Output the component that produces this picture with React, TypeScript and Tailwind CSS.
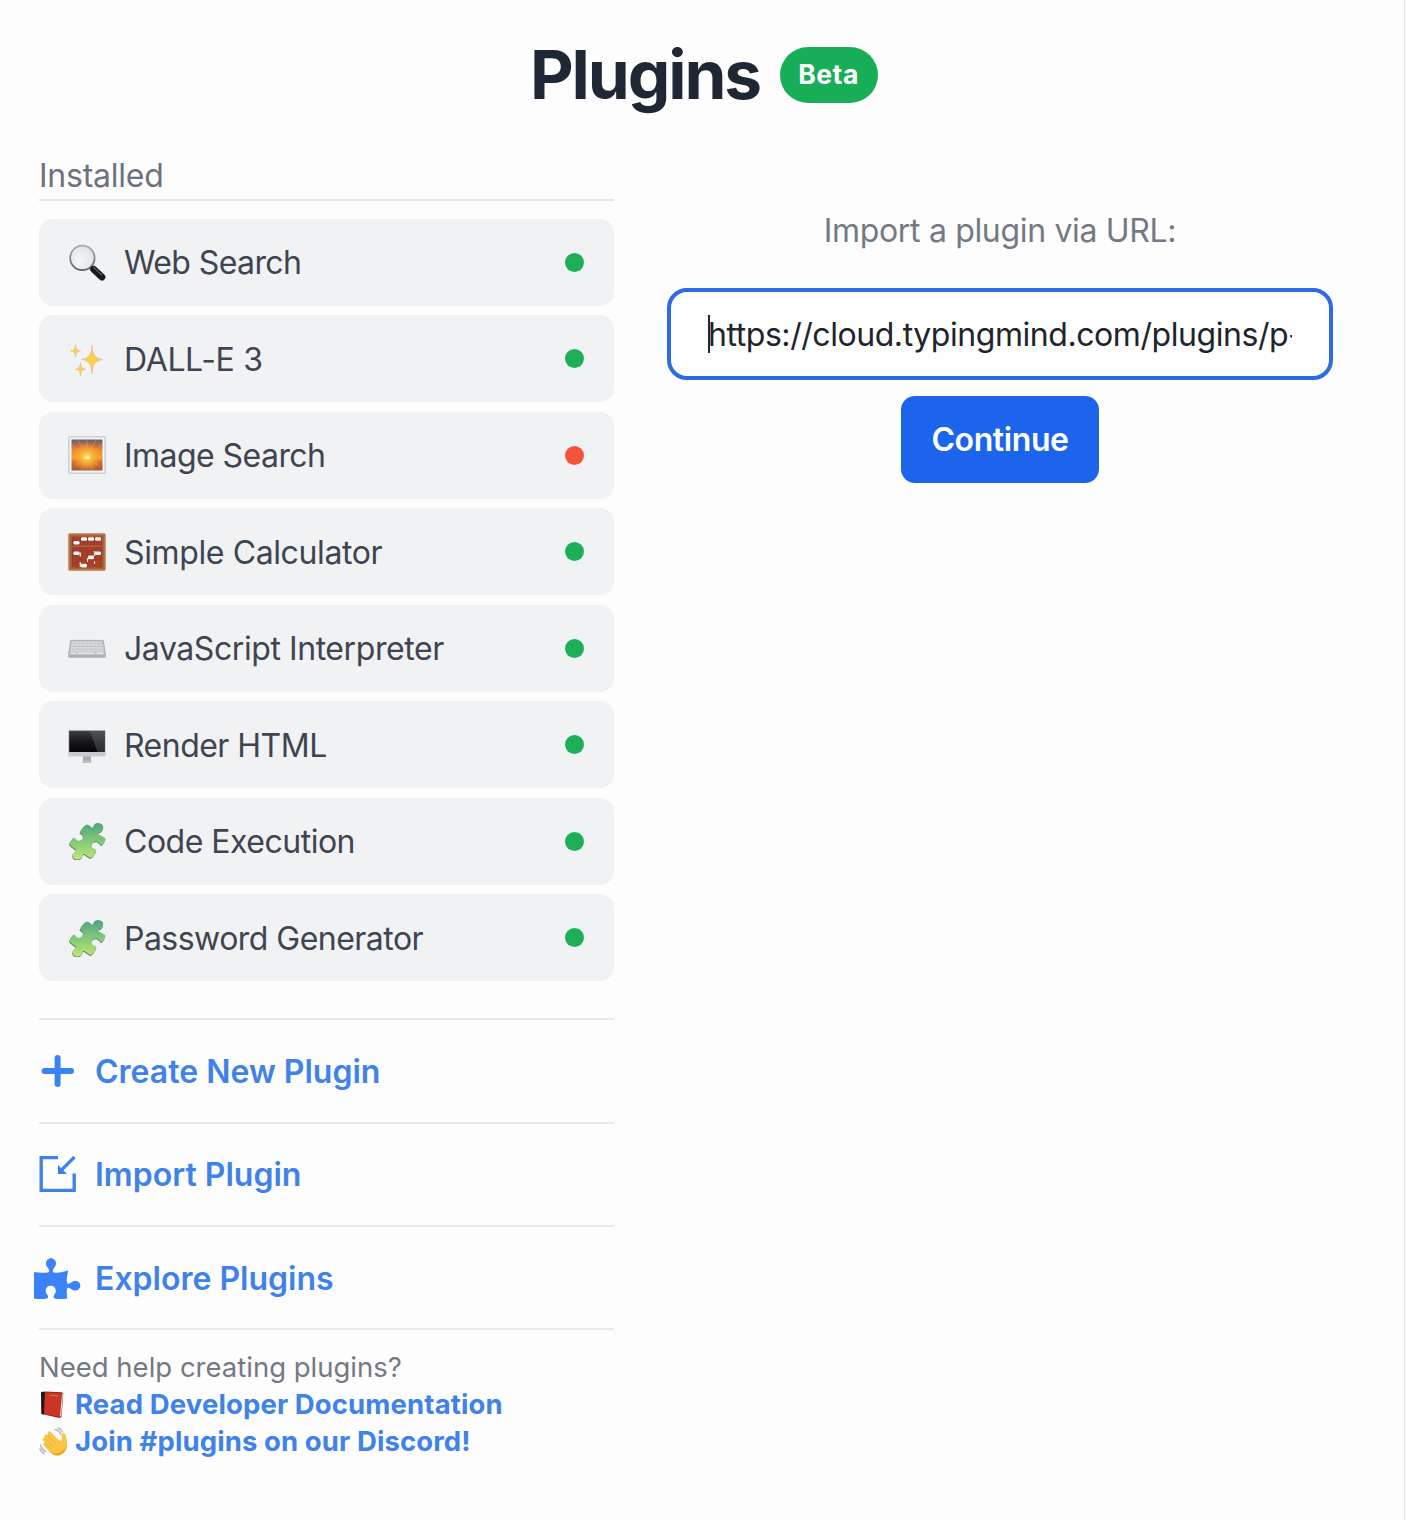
import type { ReactNode } from "react";

function Magnifier() {
  return (
    <svg viewBox="0 0 38 38" className="size-[38px] shrink-0">
      <defs>
        <radialGradient id="lens" cx="40%" cy="60%" r="65%">
          <stop offset="0" stopColor="#f6f7f8" />
          <stop offset="1" stopColor="#dfe1e4" />
        </radialGradient>
        <linearGradient id="rim" x1="0" y1="0" x2="0" y2="1">
          <stop offset="0" stopColor="#a5a7b2" />
          <stop offset="1" stopColor="#5d5f66" />
        </linearGradient>
      </defs>
      <path d="M22 23l4 3.500" stroke="#50525a" strokeWidth="3" />
      <circle cx="14.400" cy="14.900" r="12.200" fill="url(#lens)" stroke="url(#rim)" strokeWidth="1.700" />
      <path d="M25.600 26.300l8.300 7.800" stroke="#18191c" strokeWidth="6.800" strokeLinecap="round" />
      <path d="M25.800 24.500l8 7.500" stroke="#5a5d63" strokeWidth="1.100" strokeLinecap="round" />
    </svg>
  );
}

function Sparkles() {
  return (
    <svg viewBox="0 0 38 38" className="size-[38px] shrink-0">
      <g fill="#fbce52" stroke="#efb9a0" strokeWidth="0.700">
        <path d="M24 5c.7 9 2 12.800 10.500 14.500C26 21.200 24.700 25 24 34c-.7-9-2-12.800-10.500-14.500C22 17.800 23.300 14 24 5z" />
        <path d="M7.500 4.500c.4 4.300 1.200 5.700 5 6.500-3.800.8-4.600 2.200-5 6.500-.4-4.300-1.200-5.700-5-6.500 3.800-.8 4.600-2.200 5-6.500z" />
        <path d="M12.500 22.500c.4 4.300 1.200 5.900 5 6.700-3.800.8-4.600 2.400-5 6.700-.4-4.300-1.200-5.900-5-6.700 3.800-.8 4.600-2.400 5-6.700z" />
      </g>
      <path d="M24 13.500c.6 4 2 5.400 5.500 6-3.500.6-4.900 2-5.500 6-.6-4-2-5.400-5.500-6 3.500-.6 4.900-2 5.500-6z" fill="#fbce52" />
    </svg>
  );
}

function Sunrise() {
  return (
    <svg viewBox="0 0 38 38" className="size-[38px] shrink-0">
      <defs>
        <linearGradient id="sky" x1="0" y1="0" x2="0" y2="1">
          <stop offset="0" stopColor="#5b6075" />
          <stop offset="0.160" stopColor="#b3694a" />
          <stop offset="0.350" stopColor="#ea882e" />
          <stop offset="0.600" stopColor="#f7a032" />
          <stop offset="0.700" stopColor="#d97234" />
          <stop offset="1" stopColor="#a9543a" />
        </linearGradient>
        <radialGradient id="glow" cx="50%" cy="57%" r="48%">
          <stop offset="0" stopColor="#ffe878" />
          <stop offset="0.350" stopColor="#fdbb3c" stopOpacity="0.900" />
          <stop offset="1" stopColor="#f9a02c" stopOpacity="0" />
        </radialGradient>
      </defs>
      <rect x="0.900" y="0.900" width="36.200" height="36.200" rx="0.800" fill="#f8f9fa" stroke="#c3c8cf" strokeWidth="1.300" />
      <rect x="3.500" y="3.500" width="31" height="31" fill="url(#sky)" />
      <path d="M19 21L4 9M19 21L10 4M19 21V4M19 21l9-17M19 21L34 9M19 21L4 15M19 21l15-6M19 21L6 31M19 21l13 10M19 21l-6 13M19 21l6 13" stroke="#ffb63c" strokeWidth="1" opacity="0.400" />
      <rect x="3.500" y="3.500" width="31" height="31" fill="url(#glow)" />
      <ellipse cx="19" cy="21.800" rx="2.600" ry="1.200" fill="#fffbc4" />
    </svg>
  );
}

/* Each entry is [x, y, isRed]. */
const BEADS: [number, number, number][] = [
  [8.500, 5.500, 1], [16, 6, 0], [23, 6, 0], [30, 6, 0],
  [8.500, 9.800, 0], [16, 10.500, 1], [23, 10.500, 1], [30, 10.500, 1],
  [8.500, 16, 1], [16, 16, 1], [23, 16, 1], [30, 16, 1],
  [8.500, 20.200, 0], [16, 20.200, 1], [23, 20.200, 1], [30, 20.200, 0],
  [8.500, 24.400, 1], [16, 24.400, 1], [23, 24.400, 0], [30, 24.400, 1],
  [8.500, 28.500, 1], [16, 28.500, 1], [23, 28.500, 1], [30, 28.500, 1],
  [8.500, 32.600, 1], [16, 32.600, 0], [23, 32.600, 1], [30, 32.600, 1],
];

function Abacus() {
  return (
    <svg viewBox="0 0 38 38" className="size-[38px] shrink-0">
      <rect x="0.500" y="0.500" width="37" height="37" rx="1" fill="#a9623b" />
      <rect x="3.800" y="3.800" width="30.400" height="30.400" fill="#86462d" />
      <path d="M12.300 19.500v4M19.500 25v4M26.500 18v5M12.300 29v5M26.500 28v3" stroke="#ecd9cd" strokeWidth="1.600" />
      {BEADS.map(([x, y, red], i) => (
        <rect key={i} x={x - 3} y={y - 1.800} width="6" height="3.600" rx="1.300" fill={red ? "#b23a28" : "#f9f3ef"} />
      ))}
      <path d="M2 13.300h34" stroke="#a9643d" strokeWidth="1.500" />
      <rect x="1" y="1" width="36" height="36" rx="0.600" fill="none" stroke="#c58a5f" strokeWidth="1" />
    </svg>
  );
}

function Keyboard() {
  return (
    <svg viewBox="0 0 38 38" className="size-[38px] shrink-0">
      <path d="M2.500 11.500h33L37.600 25v2.600q0 1.200-1.200 1.200H1.600q-1.200 0-1.200-1.200V25z" fill="#aeafb2" />
      <path d="M2.800 11.300h32.400l2.200 14.300q0 1-1 1H1.600q-1 0-1-1z" fill="#bfc0c3" stroke="#a9aaad" strokeWidth="0.600" />
      <path d="M3.800 13.500h30.400M3.500 16.200h31M3 18.900h32M2.600 21.600h32.800" stroke="#dedfe1" strokeWidth="1.700" strokeDasharray="2.200 .5" />
      <path d="M2.500 24.300h5.500M9.500 24.300h17M28.500 24.300h7" stroke="#e8e8ea" strokeWidth="1.500" />
    </svg>
  );
}

function Monitor() {
  return (
    <svg viewBox="0 0 38 38" className="size-[38px] shrink-0">
      <defs>
        <linearGradient id="screen" x1="0" y1="0" x2="0" y2="1">
          <stop offset="0" stopColor="#3a3d42" />
          <stop offset="0.500" stopColor="#17181b" />
          <stop offset="1" stopColor="#050506" />
        </linearGradient>
      </defs>
      <path d="M15 30h8v6h-8z" fill="#a9abb2" />
      <path d="M14.500 34.500h9V37h-9z" fill="#bdbfc5" />
      <path d="M.8 4.500h36.400V26H.8z" fill="#55585f" />
      <path d="M1.500 5.200h35V26h-35z" fill="url(#screen)" />
      <path d="M22 5.200h14.500V26h-7z" fill="#777b83" opacity="0.350" />
      <path d="M.3 26h37.400v3.500q0 1-1 1H1.300q-1 0-1-1z" fill="#c9cad1" />
    </svg>
  );
}

function Jigsaw({ id }: { id: string }) {
  const d =
    "M11.500 9.500c1.800-3.800 4-6.200 6.800-7.300 2 .2 3.700 1.800 5.200 3.200 1.500.3 1.200-2.200 2.600-3.600C28.500-.2 33 .6 34.300 3.400c1.200 3-.8 6-3.600 6.600-1.400.4-1.600 1.500-.4 2.300l6.700 3.700c-.3 2.600-1.900 4.700-3.600 6.800-1.900.3-2.300-2.300-4.400-3.400-2.700-1-5.500.6-6 3.200-.4 2.700 1.700 4 4 4.200 1.200.4.900 1.700.3 2.700-1.200 2.400-2.900 5-4.800 6.200-2.600-.6-4.600-2.700-6.700-3.900-1.700-.3-1.600 1.700-2.600 3.300-1.600 2.300-5 2.800-7.400 1.300-2.500-1.700-2.300-5.400.2-6.900 1.200-.8 2.200-1.600 1-2.500C5 25.600 2.500 24 .8 22c.4-2.800 2.200-5 4.200-6.800 1.700.2 2 2.400 3.800 3.100 2.500.8 5.300-.8 5.800-3.400.2-2.500-1.200-3.700-3.200-4.100z";
  return (
    <svg viewBox="0 0 38 38" className="size-[38px] shrink-0">
      <defs>
        <linearGradient id={id} x1="0" y1="0" x2="0" y2="1">
          <stop offset="0" stopColor="#4fa481" />
          <stop offset="0.500" stopColor="#83c978" />
          <stop offset="1" stopColor="#bde777" />
        </linearGradient>
      </defs>
      <g transform="translate(.6 .3)">
        <path d={d} fill="#56795a" transform="translate(-.3 .9)" />
        <path d={d} fill={`url(#${id})`} />
      </g>
    </svg>
  );
}

function Book() {
  return (
    <svg viewBox="0 0 28 28" className="h-[28px] w-[28px]">
      <path d="M2 1l4-.6 17 .8 1.300 1L22.500 26l-2 1L2.500 23z" fill="#97251c" />
      <path d="M2 1l4 .3-1 22.300L2.500 23z" fill="#221616" />
      <path d="M6 1.400l16.500.8-1.800 23.600L5.200 23z" fill="#cb3527" />
      <path d="M23 2.200l1 .5L22.200 25l-1.400.8z" fill="#e8cfc7" />
      <path d="M11 4.500l8 .4" stroke="#e0705c" strokeWidth="1" />
    </svg>
  );
}

function Wave() {
  return (
    <svg viewBox="0 0 30 30" className="h-[30px] w-[30px]">
      <g fill="none" stroke="#b3b6bb" strokeWidth="1.500" strokeLinecap="round">
        <path d="M16 2.500q4 .5 6 5M19 1q3 .8 4.500 4M1.500 18q.8 4 5 6.500M1 22q1 3 4 4.500" />
      </g>
      <path
        d="M5.500 8.500c1-1.400 2.500-1 3.500.2L8.500 6c.5-1.800 2.500-2 3.700-.6l6.800 7.100 3.500 1.500c.5-2.500-.3-5.500.8-7.300 1.200-1.300 3.200-.5 3.500 1.500.3 3 1.600 6 1.300 9.800-.3 5.500-4 10.200-9 10.500-3.600.2-6.600-2-9.200-4.500l-5.200-5.400c-1.300-1.600.2-3.200 1.600-2.600l-2.300-2.500c-1.300-1.700.5-3.500 2-2.500L5 9.800z"
        fill="#fcc645"
      />
      <path d="M9 8.700l7 7.300M6.500 11.500l7 7.200M6.300 16l5 5.300" stroke="#e9a838" strokeWidth="0.800" strokeLinecap="round" />
      <path d="M27.800 18c-.3 5.500-4 10.200-9 10.500-3.600.2-6.600-2-9.200-4.500 4 2.500 8 3 11.500 1.200 3.500-1.700 5.500-4 6.700-7.200z" fill="#f0a52e" />
    </svg>
  );
}

function PlusIcon() {
  return (
    <svg viewBox="0 0 38 38" className="size-[38px]">
      <path d="M18.600 6v26M5.600 19H32" stroke="#3b82f6" strokeWidth="6" strokeLinecap="round" />
    </svg>
  );
}

function ImportIcon() {
  return (
    <svg viewBox="0 0 38 38" className="size-[38px]">
      <path d="M19 2.600H2.200v32.800h33V18.500" fill="none" stroke="#3f82ea" strokeWidth="3.400" />
      <path d="M35.500 2L23 14.500" stroke="#3f82ea" strokeWidth="3.200" />
      <path d="M19 10v9h9z" fill="#3b7fec" />
    </svg>
  );
}

function PuzzleIcon() {
  return (
    <svg viewBox="0 0 48 42" className="-ml-[2px] h-[42px] w-[48px] shrink-0">
      <path
        d="M1 15c4.500.8 10 1.300 14.500.3 1.200-.6.700-2.500-.5-4.300-1.200-1.500-2-2.500-2-4.300C13 3.500 15.200 1.200 18 1.200s5 2.300 5 5.300c0 2-.9 3-2 4.500-1.300 1.900-1.800 3.900-.4 4.400 4.800.8 9.600-.6 14.600-1.900-.9 4.500-2 8-1.200 12 .4 2 2.100 1.500 3.700.3 1.700-1.400 2.800-1.900 4.700-1.900 3 0 4.900 2 4.900 4.700s-2 5-4.900 5c-2 0-3-.6-4.600-1.800-1.700-1.100-3.500-1.500-3.900.3-.4 3.300 0 6.500.3 9.300-4 .9-9 .9-12.300.2-1.900-.7-1.500-2.300-.5-4 .9-1.400 1.400-2.200 1.400-3.900 0-3-2.200-5-5.100-5s-5 2-5 5c0 1.600.6 2.500 1.500 3.900 1 1.600 1.500 3.400-.4 4-3.600.7-9.300.8-12.800-.2z"
        fill="#3b82f6"
      />
    </svg>
  );
}

const PLUGINS: { name: string; icon: ReactNode; on: boolean; track: string }[] = [
  { name: "Web Search", icon: <Magnifier />, on: true, track: "tracking-[-0.600px]" },
  { name: "DALL-E 3", icon: <Sparkles />, on: true, track: "tracking-[-0.350px]" },
  { name: "Image Search", icon: <Sunrise />, on: false, track: "tracking-[-0.550px]" },
  { name: "Simple Calculator", icon: <Abacus />, on: true, track: "tracking-[-0.380px]" },
  { name: "JavaScript Interpreter", icon: <Keyboard />, on: true, track: "tracking-[-0.430px]" },
  { name: "Render HTML", icon: <Monitor />, on: true, track: "tracking-[-0.520px]" },
  { name: "Code Execution", icon: <Jigsaw id="jig-a" />, on: true, track: "tracking-[-0.500px]" },
  { name: "Password Generator", icon: <Jigsaw id="jig-b" />, on: true, track: "tracking-[-0.530px]" },
];

const ACTIONS: { name: string; icon: ReactNode }[] = [
  { name: "Create New Plugin", icon: <PlusIcon /> },
  { name: "Import Plugin", icon: <ImportIcon /> },
  { name: "Explore Plugins", icon: <PuzzleIcon /> },
];

export default function App() {
  return (
    <div className="h-[1520px] w-[1406px] overflow-hidden bg-[#fdfdfd] font-['Inter',sans-serif]">
      <div className="h-full w-[1405px] border-r border-[#dfe0e4]">
        <header className="flex h-[149px] items-center justify-center gap-[20px] pl-[4px]">
          <h1 className="text-[67.500px] leading-[80px] font-[650] tracking-[-2.100px] text-[#1f2735]">Plugins</h1>
          <span className="flex h-[56px] w-[98px] items-center justify-center rounded-full bg-[#17ae57] pt-px pr-px text-[26.500px] font-bold tracking-[0.500px] text-white">
            Beta
          </span>
        </header>
        <main className="flex pt-px pl-[39px]">
          <section className="w-[575px]">
            <h2 className="h-[50.500px] border-b-2 border-[#e4e6ea] pt-[6px] text-[32px] leading-[40px] font-[430] tracking-[-0.250px] text-[#6d727d]">Installed</h2>
            <ul className="mt-[18.500px] flex flex-col gap-[9.700px]">
              {PLUGINS.map((p) => (
                <li key={p.name} className="flex h-[86.800px] items-center rounded-[14px] bg-[#f1f2f4] pr-[30px] pl-[29px]">
                  {p.icon}
                  <span className={`ml-[18px] pt-[2px] text-[32px] font-[430] text-[#3f4550] ${p.track}`}>{p.name}</span>
                  <i className={p.on ? "ml-auto size-[19px] rounded-full bg-[#1dae5a]" : "ml-auto size-[19px] rounded-full bg-[#f5533d]"} />
                </li>
              ))}
            </ul>
            <ul className="mt-[37px] border-b-2 border-[#e7e8ea]">
              {ACTIONS.map((a) => (
                <li key={a.name} className="flex h-[103.400px] items-center gap-[18px] border-t-2 border-[#e7e8ea]">
                  <span className="flex w-[38px] shrink-0 justify-center">{a.icon}</span>
                  <a className="pt-[2px] text-[32px] font-semibold text-[#3f82ea]">{a.name}</a>
                </li>
              ))}
            </ul>
            <div className="pt-[19px] text-[27.500px] leading-[37px] text-[#747983]">
              <p>Need help creating plugins?</p>
              <p className="flex items-center font-[650] tracking-[0.120px] text-[#3f82ea]"><span className="w-[36px]"><Book /></span><a>Read Developer Documentation</a></p>
              <p className="flex items-center font-[650] tracking-[0.100px] text-[#3f82ea]"><span className="w-[36px]"><Wave /></span><a>Join #plugins on our Discord!</a></p>
            </div>
          </section>
          <section className="ml-[53px] flex w-[666px] flex-col items-center pt-[61px]">
            <p className="text-[32px] leading-[40px] font-[430] tracking-[-0.330px] text-[#747983]">Import a plugin via URL:</p>
            <div className="mt-[37px] flex h-[92px] w-full items-center rounded-[20px] border-4 border-[#2b6be4] bg-[#fefefe] px-[37px]">
              <i className="-mr-[2px] h-[38px] w-[2px] shrink-0 bg-[#1f2735]" />
              <span className="min-w-0 flex-1 overflow-hidden pt-px text-[32px] tracking-[-0.440px] whitespace-nowrap text-[#20242c]">https://cloud.typingmind.com/plugins/p-</span>
            </div>
            <button className="mt-[16px] h-[87px] w-[198px] rounded-[14px] bg-[#1c64ec] pt-px text-[32px] font-semibold tracking-[-0.400px] text-white">Continue</button>
          </section>
        </main>
      </div>
    </div>
  );
}
